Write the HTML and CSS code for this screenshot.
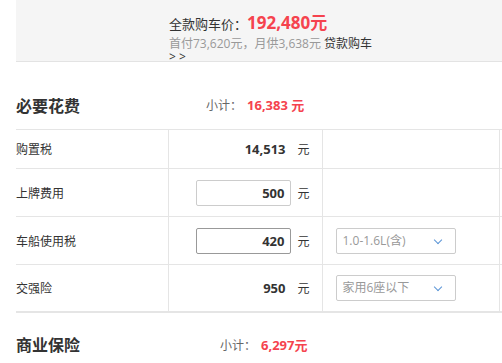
FILE: index.html
```html
<!DOCTYPE html>
<html>
  <head>
    <meta charset="utf-8">
    <title>购车费用</title>
    <link rel="stylesheet" href="styles.css">
  </head>
  <body>
    <div class="total">
      <div class="info">
        <p class="full">全款购车价：<b>192,480元</b></p>
        <p class="loan">首付73,620元，月供3,638元 <a href="#">贷款购车 &gt; &gt;</a></p>
      </div>
    </div>

    <div class="head">
      <h2>必要花费</h2>
      <span class="sum sum-need">小计：<b>16,383 元</b></span>
    </div>
    <table class="fees">
      <tr class="r1">
        <td class="name">购置税</td>
        <td class="val"><span class="num">14,513</span><span class="unit">元</span></td>
        <td class="opt"></td>
        <td></td>
      </tr>
      <tr>
        <td class="name">上牌费用</td>
        <td class="val"><input class="num box" value="500"><span class="unit">元</span></td>
        <td class="opt"></td>
        <td></td>
      </tr>
      <tr>
        <td class="name">车船使用税</td>
        <td class="val"><input class="num box focus" value="420"><span class="unit">元</span></td>
        <td class="opt"><div class="select">1.0-1.6L(含)<i></i></div></td>
        <td></td>
      </tr>
      <tr class="last">
        <td class="name">交强险</td>
        <td class="val"><span class="num">950</span><span class="unit">元</span></td>
        <td class="opt"><div class="select">家用6座以下<i></i></div></td>
        <td></td>
      </tr>
    </table>

    <div class="head head2">
      <h2>商业保险</h2>
      <span class="sum sum-ins">小计：<b>6,297元</b></span>
    </div>
  </body>
</html>
```

FILE: styles.css
```css
body {
    margin: 0;
    overflow: hidden;
    font-family: "Open Sans", "Noto Sans CJK SC", sans-serif;
    font-size: 12px;
    color: #333;
    background: #fff;
}
p { margin: 0 }

.total {
    margin-left: 16px;
    height: 61px;
    background: #f5f5f5;
    border-bottom: 1px solid #e3e3e3;
    overflow: hidden;
}
.info {
    width: 210px;
    margin-left: 153px;
    padding-top: 12px;
}
.full { font-size: 13px; line-height: 22px }
.full b { color: #f5434e; font-size: 17px; }
.loan { color: #999; line-height: 13px; margin-top: 2px }
.loan a { color: #333; text-decoration: none }

.head {
    display: flex;
    align-items: center;
    box-sizing: border-box;
    height: 67px;
    padding-top: 18px;
    margin-left: 16px;
}
.head h2 {
    margin: 0;
    width: 190px;
    font-size: 16px;
    font-weight: bold;
}
.sum { color: #666 }
.sum b { color: #f5434e; font-size: 13px; margin-left: 5px }
.head2 { height: 63px; padding-top: 0 }
.head2 h2 { width: 204px }

.fees {
    border-collapse: collapse;
    margin-left: 16px;
    width: 700px;
    table-layout: fixed;
}
.fees td {
    box-sizing: border-box;
    border-top: 1px solid #e5e5e5;
    border-right: 1px solid #e5e5e5;
    height: 48px;
    padding: 0;
    font-size: 12px;
}
.fees tr.r1 td { height: 39px }
.fees tr.last td { height: 47px; border-bottom: 2px solid #e5e5e5 }
.fees td:nth-child(1) { width: 152px }
.fees td:nth-child(2) { width: 154px }
.fees td:nth-child(3) { width: 177px }
.fees td:last-child { border-right: none }

.fees td.val { padding-left: 27px }
.num {
    display: inline-block;
    width: 95px;
    box-sizing: border-box;
    padding: 0 5px 0 0;
    text-align: right;
    font-weight: bold;
    font-size: 13px;
    font-family: "Open Sans", "Noto Sans CJK SC", sans-serif;
    color: #333;
    vertical-align: middle;
}
.box {
    height: 26px;
    border: 1px solid #ccc;
    border-radius: 2px;
    background: #fff;
    outline: none;
}
.box.focus { border-color: #999 }
.unit { margin-left: 7px; vertical-align: middle }

.fees td.opt { padding-left: 13px }
.select {
    position: relative;
    width: 120px;
    height: 26px;
    box-sizing: border-box;
    border: 1px solid #ccc;
    border-radius: 2px;
    padding-left: 6px;
    line-height: 24px;
    color: #999;
    font-size: 12px;
}
.select i {
    position: absolute;
    right: 14px;
    top: 8px;
    width: 5px;
    height: 5px;
    border-right: 1px solid #5b95d6;
    border-bottom: 1px solid #5b95d6;
    transform: rotate(45deg);
}
```
